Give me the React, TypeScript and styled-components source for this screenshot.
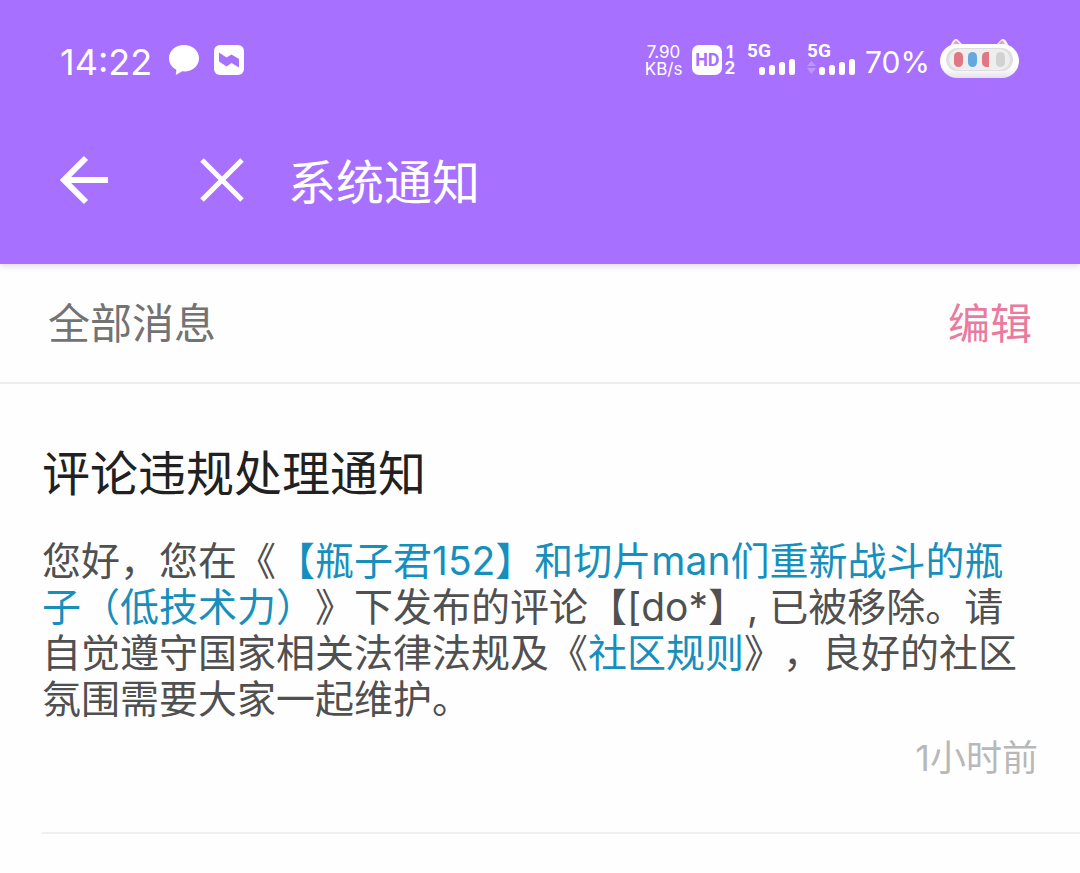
import React from "react";
import styled, { createGlobalStyle } from "styled-components";

const GlobalStyle = createGlobalStyle`
  *, *::before, *::after { box-sizing: border-box; }
  body {
    margin: 0;
    background: #fefefe;
    color: #505050;
    font-family: Inter, "Noto Sans CJK SC", sans-serif;
    text-spacing-trim: space-all;
  }
`;

const Header = styled.header`
  position: relative;
  background: #a770ff;
  color: #fff;
  box-shadow: 0 2px 6px rgba(120, 70, 150, 0.22);
`;

const StatusBar = styled.div`
  display: flex;
  justify-content: space-between;
  height: 96px;
  padding: 24px 60px 0;
`;

const StatusGroup = styled.div<{ $gap: number }>`
  display: flex;
  align-items: center;
  height: 72px;
  gap: ${(p) => p.$gap}px;

  svg { display: block; flex: none; }
`;

const Clock = styled.time`
  margin-right: 2px;
  font-size: 36px;
  line-height: 40px;
  padding-top: 4px;
`;

const Speed = styled.div`
  font-size: 17px;
  line-height: 17px;
  text-align: center;
  padding-top: 2px;
`;

const HdBadge = styled.div`
  display: flex;
  align-items: center;
  gap: 2px;
`;

const HdBox = styled.span`
  width: 30px;
  border-radius: 7px;
  background: #fff;
  color: #a770ff;
  font-family: Roboto, sans-serif;
  font-size: 18px;
  font-weight: 700;
  line-height: 30px;
  text-align: center;
`;

const SimNumbers = styled.span`
  display: grid;
  font-size: 17px;
  font-weight: 700;
  line-height: 16px;
  text-align: center;
`;

const Signal = styled.div`
  display: grid;
  width: 48px;
  margin-left: 2px;
  justify-items: end;
`;

const SignalLabel = styled.span`
  justify-self: start;
  font-family: Roboto, sans-serif;
  font-size: 19px;
  font-weight: 700;
  line-height: 14px;
`;

const Percent = styled.span`
  font-size: 30px;
  line-height: 40px;
  padding-top: 4px;
`;

const TitleBar = styled.nav`
  display: flex;
  align-items: center;
  height: 168px;
  padding: 0 56px;
`;

const IconButton = styled.button`
  display: grid;
  place-items: center;
  width: 56px;
  height: 56px;
  padding: 0;
  border: 0;
  background: none;
  color: inherit;
  cursor: pointer;

  & + & { margin: 0 38px 0 82px; }
`;

const PageTitle = styled.h1`
  margin: 0;
  padding-top: 6px;
  font-size: 48px;
  font-weight: 400;
  line-height: 64px;
`;

const ListBar = styled.div`
  display: flex;
  align-items: center;
  justify-content: space-between;
  height: 120px;
  padding: 2px 48px 0;
  border-bottom: 2px solid #ededed;
  font-size: 42px;
  line-height: 60px;
  color: #737373;
`;

const EditButton = styled.button`
  padding: 0;
  border: 0;
  background: none;
  color: #e87b9e;
  font: inherit;
  cursor: pointer;
`;

const Notice = styled.article`
  margin-left: 42px;
  padding: 56px 42px 50px 0;
  border-bottom: 2px solid #f0f0f0;
`;

const NoticeTitle = styled.h2`
  margin: 0 0 30px;
  color: #212121;
  font-size: 48px;
  font-weight: 400;
  line-height: 68px;
`;

const NoticeBody = styled.p`
  margin: 0;
  font-size: 39px;
  line-height: 46px;
`;

const NoticeLink = styled.a`
  color: #178fbd;
  text-decoration: none;
`;

const NoticeTime = styled.time`
  display: block;
  margin-top: 12px;
  color: #b8b8b8;
  font-size: 36px;
  line-height: 48px;
  text-align: right;
`;

function ChatIcon() {
  return (
    <svg width="30" height="30" viewBox="0 0 30 30" aria-hidden="true">
      <path fill="#fff" d="M15 0C6.500 0 0 5.700 0 13.200c0 5 2.900 9.200 7.400 11.500L6.800 30l6.500-3.700C22.500 27.300 30 21.300 30 13.200 30 5.700 23.500 0 15 0Z" />
    </svg>
  );
}

function AppIcon() {
  return (
    <svg width="30" height="30" viewBox="0 0 30 30" aria-hidden="true">
      <rect width="30" height="30" rx="6" fill="#fff" />
      <path fill="#a770ff" d="M5 7.500 12.500 12.500 17.500 9.500 25 14v8.500L17.500 18l-5 3.500L5 16.500Z" />
    </svg>
  );
}

function Bars({ data = false }: { data?: boolean }) {
  return (
    <svg width="48" height="18" viewBox="0 0 48 18" fill="#fff" aria-hidden="true">
      {data && (
        <path fill="#c096ff" d="M0 8l4.500-5L9 8ZM0 10h9l-4.500 6Z" />
      )}
      <rect x="12" y="9" width="6" height="8" rx="2.500" />
      <rect x="22" y="7" width="6" height="10" rx="2.500" />
      <rect x="32" y="4" width="6" height="13" rx="2.500" />
      <rect x="42" y="1" width="6" height="16" rx="2.500" />
    </svg>
  );
}

function BatteryIcon() {
  return (
    <svg width="80" height="42" viewBox="0 0 80 42" aria-hidden="true">
      <defs>
        <linearGradient id="shell" x1="0" y1="0" x2="0" y2="1">
          <stop offset="0.7" stopColor="#fff" />
          <stop offset="1" stopColor="#e6e0ec" />
        </linearGradient>
      </defs>
      <path fill="#fffafd" d="M9 9 13 2q3-4 6 0l6 6ZM54 8l6-6q3-4 6 0l4 7Z" />
      <path fill="#dfa8b3" d="m12 7 3-5q1-1 2 0l5 5ZM57 7l4-5q1-1 2 0l3 5Z" />
      <rect y="5" width="79" height="34" rx="17" fill="url(#shell)" />
      <rect x="6" y="9" width="67" height="23" rx="11.500" fill="#dedde1" />
      <rect x="9" y="10" width="61" height="21" rx="10.500" fill="#efeeef" />
      <rect x="14" y="13" width="9" height="15" rx="4.500" fill="#df7883" />
      <rect x="28" y="13" width="9" height="15" rx="4.500" fill="#64a8df" />
      <path fill="#df7883" d="M49 13h-2.500a4.500 4.500 0 0 0-4.500 4.500v6a4.500 4.500 0 0 0 4.500 4.500H49Z" />
      <rect x="56" y="13" width="9" height="15" rx="4.500" fill="#d2d2d2" />
    </svg>
  );
}

function BackIcon() {
  return (
    <svg width="50" height="50" viewBox="0 0 50 50" fill="none" stroke="currentColor" strokeWidth="6" aria-hidden="true">
      <path d="M27 3 5 25l22 22M5 25h44" />
    </svg>
  );
}

function CloseIcon() {
  return (
    <svg width="44" height="44" viewBox="0 0 44 44" fill="none" stroke="currentColor" strokeWidth="5" aria-hidden="true">
      <path d="m2 2 40 40M42 2 2 42" />
    </svg>
  );
}

export default function App() {
  return (
    <>
      <GlobalStyle />
      <Header>
        <StatusBar>
          <StatusGroup $gap={15}>
            <Clock>14:22</Clock>
            <ChatIcon />
            <AppIcon />
          </StatusGroup>
          <StatusGroup $gap={10}>
            <Speed>
              7.90
              <br />
              KB/s
            </Speed>
            <HdBadge>
              <HdBox>HD</HdBox>
              <SimNumbers>
                <span>1</span>
                <span>2</span>
              </SimNumbers>
            </HdBadge>
            <Signal>
              <SignalLabel>5G</SignalLabel>
              <Bars />
            </Signal>
            <Signal>
              <SignalLabel>5G</SignalLabel>
              <Bars data />
            </Signal>
            <Percent>70%</Percent>
            <BatteryIcon />
          </StatusGroup>
        </StatusBar>
        <TitleBar>
          <IconButton type="button" aria-label="返回">
            <BackIcon />
          </IconButton>
          <IconButton type="button" aria-label="关闭">
            <CloseIcon />
          </IconButton>
          <PageTitle>系统通知</PageTitle>
        </TitleBar>
      </Header>
      <main>
        <ListBar>
          <span>全部消息</span>
          <EditButton type="button">编辑</EditButton>
        </ListBar>
        <Notice>
          <NoticeTitle>评论违规处理通知</NoticeTitle>
          <NoticeBody>
            您好，您在《
            <NoticeLink href="#video">【瓶子君152】和切片man们重新战斗的瓶子（低技术力）</NoticeLink>
            》下发布的评论【[do*】, 已被移除。请自觉遵守国家相关法律法规及《
            <NoticeLink href="#rules">社区规则</NoticeLink>
            》，良好的社区氛围需要大家一起维护。
          </NoticeBody>
          <NoticeTime>1小时前</NoticeTime>
        </Notice>
      </main>
    </>
  );
}
